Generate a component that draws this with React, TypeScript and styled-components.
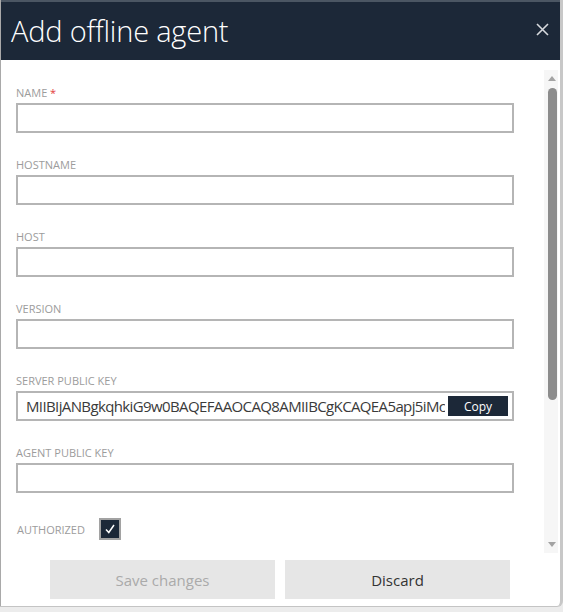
import React from "react";
import styled, { createGlobalStyle } from "styled-components";

const Global = createGlobalStyle`
  html, body { margin: 0; padding: 0; background: #ececec; }
  body { font-family: "Open Sans", "Noto Sans", "Liberation Sans", sans-serif; }
  * { box-sizing: border-box; }
`;

const Dialog = styled.div`
  width: 563px;
  height: 607px;
  background: #ffffff;
  border-left: 1px solid #a9a9a9;
  border-right: 3px solid #c8c8c8;
  border-bottom: 1px solid #c4c4c4;
  border-bottom-right-radius: 6px;
  display: flex;
  flex-direction: column;
  overflow: hidden;
`;

const Header = styled.div`
  height: 60px;
  flex: none;
  background: #1c2838;
  border-top: 2px solid #4b5663;
  display: flex;
  align-items: center;
  justify-content: space-between;
  padding: 0 10px 0 10px;
`;

const Title = styled.h1`
  margin: 0;
  font-family: "Open Sans", "Noto Sans", sans-serif;
  font-weight: 300;
  font-size: 29px;
  color: #ffffff;
  letter-spacing: -0.2px;
  padding-bottom: 2px;
`;

const Close = styled.button`
  width: 16px;
  height: 16px;
  padding: 0;
  margin-bottom: 4px;
  border: none;
  background: none;
  display: flex;
  align-items: center;
  justify-content: center;
  cursor: pointer;
`;

const ScrollArea = styled.div`
  height: 493px;
  flex: none;
  display: flex;
`;

const Form = styled.div`
  flex: 1;
  padding: 26px 30px 0 15px;
  display: flex;
  flex-direction: column;
  gap: 25px;
  overflow: hidden;
`;

const Field = styled.div`
  display: flex;
  flex-direction: column;
`;

const Label = styled.label`
  font-size: 11px;
  line-height: 14px;
  color: #9c9c9c;
  text-transform: uppercase;
  margin-bottom: 3px;
`;

const Required = styled.span`
  color: #e23b3b;
`;

const Input = styled.input`
  height: 30px;
  width: 100%;
  border: 2px solid #b5b5b5;
  background: #fff;
  outline: none;
  padding: 0 8px;
  font-family: inherit;
  font-size: 15px;
  color: #333;
`;

const KeyBox = styled.div`
  height: 30px;
  border: 2px solid #b5b5b5;
  display: flex;
  align-items: center;
  padding: 0 4px 0 8px;
  gap: 3px;
`;

const KeyText = styled.span`
  flex: 1;
  min-width: 0;
  overflow: hidden;
  white-space: nowrap;
  font-size: 15px;
  letter-spacing: -0.62px;
  color: #3a3a3a;
`;

const CopyButton = styled.button`
  flex: none;
  width: 60px;
  height: 20px;
  border: none;
  background: #1c2838;
  color: #ffffff;
  font-family: inherit;
  font-size: 12px;
  padding: 0;
  cursor: pointer;
`;

const CheckRow = styled.div`
  display: flex;
  align-items: center;
  gap: 14px;
  padding-left: 1px;
`;

const CheckLabel = styled.span`
  font-size: 11px;
  color: #9c9c9c;
  text-transform: uppercase;
`;

const CheckBox = styled.span`
  width: 22px;
  height: 22px;
  border: 2px solid #a2a2a2;
  background: #1c2838;
  display: flex;
  align-items: center;
  justify-content: center;
`;

const Scrollbar = styled.div`
  width: 14px;
  margin: 10px 2px 0 0;
  background: #f6f6f6;
  display: flex;
  flex-direction: column;
  align-items: center;
  padding-left: 2px;
`;

const Arrow = styled.div<{ $down?: boolean }>`
  width: 0;
  height: 0;
  border-left: 4px solid transparent;
  border-right: 4px solid transparent;
  ${(p) =>
    p.$down
      ? "border-top: 5px solid #a3a3a3; margin-top: auto; margin-bottom: 6px;"
      : "border-bottom: 5px solid #a3a3a3; margin-top: 6px;"}
`;

const Thumb = styled.div`
  width: 9px;
  height: 312px;
  margin-top: 7px;
  background: #8c8c8c;
  border-radius: 5px;
`;

const Footer = styled.div`
  flex: 1;
  display: flex;
  justify-content: center;
  gap: 10px;
  padding-top: 7px;
  padding-right: 1px;
`;

const ActionButton = styled.button<{ $disabled?: boolean }>`
  width: 225px;
  height: 39px;
  border: none;
  background: #e6e6e6;
  color: ${(p) => (p.$disabled ? "#aaaaaa" : "#333333")};
  font-family: inherit;
  font-size: 15px;
  cursor: ${(p) => (p.$disabled ? "default" : "pointer")};
`;

const fields = ["Name", "Hostname", "Host", "Version"];

export default function App() {
  return (
    <>
      <Global />
      <Dialog>
        <Header>
          <Title>Add offline agent</Title>
          <Close aria-label="Close">
            <svg width="13" height="13" viewBox="0 0 13 13">
              <path d="M1 1L12 12M12 1L1 12" stroke="#d6d9dd" strokeWidth="1.6" />
            </svg>
          </Close>
        </Header>
        <ScrollArea>
          <Form>
            {fields.map((f, i) => (
              <Field key={f}>
                <Label>
                  {f}
                  {i === 0 && <Required> *</Required>}
                </Label>
                <Input />
              </Field>
            ))}
            <Field>
              <Label>Server public key</Label>
              <KeyBox>
                <KeyText>MIIBIjANBgkqhkiG9w0BAQEFAAOCAQ8AMIIBCgKCAQEA5apj5iMc</KeyText>
                <CopyButton>Copy</CopyButton>
              </KeyBox>
            </Field>
            <Field>
              <Label>Agent public key</Label>
              <Input />
            </Field>
            <CheckRow>
              <CheckLabel>Authorized</CheckLabel>
              <CheckBox>
                <svg width="12" height="12" viewBox="0 0 12 12">
                  <path d="M2 6.5L4.8 9.5L10 2" fill="none" stroke="#ffffff" strokeWidth="1.5" />
                </svg>
              </CheckBox>
            </CheckRow>
          </Form>
          <Scrollbar>
            <Arrow />
            <Thumb />
            <Arrow $down />
          </Scrollbar>
        </ScrollArea>
        <Footer>
          <ActionButton $disabled>Save changes</ActionButton>
          <ActionButton>Discard</ActionButton>
        </Footer>
      </Dialog>
    </>
  );
}
